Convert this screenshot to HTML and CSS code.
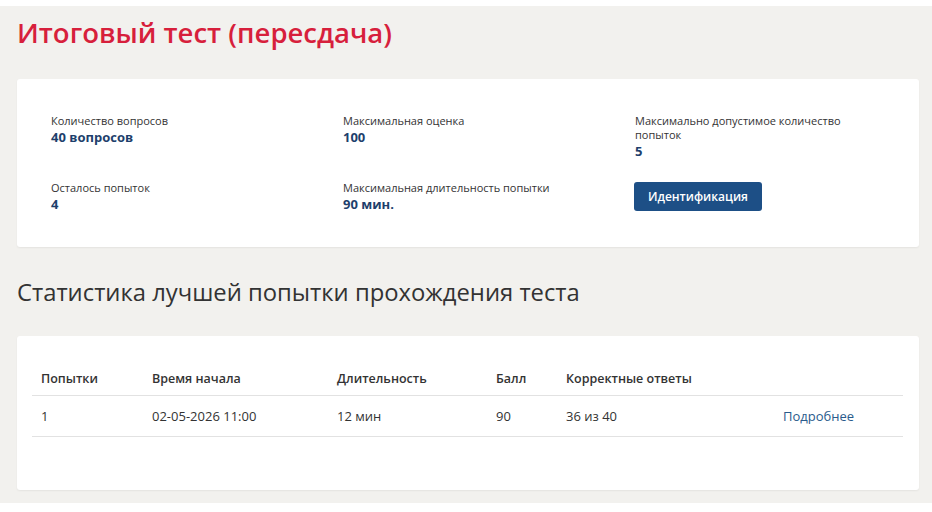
FILE: index.html
```html
<!DOCTYPE html>
<html lang="ru">
<head>
<meta charset="utf-8">
<title>Итоговый тест (пересдача)</title>
<link rel="stylesheet" href="styles.css">
</head>
<body>
<main class="page">
  <h1 class="title">Итоговый тест (пересдача)</h1>

  <section class="card info-card">
    <div class="info-grid">
      <div class="info-item">
        <div class="info-label">Количество вопросов</div>
        <div class="info-value">40 вопросов</div>
      </div>
      <div class="info-item">
        <div class="info-label">Максимальная оценка</div>
        <div class="info-value">100</div>
      </div>
      <div class="info-item">
        <div class="info-label info-label-narrow">Максимально допустимое количество попыток</div>
        <div class="info-value">5</div>
      </div>
      <div class="info-item">
        <div class="info-label">Осталось попыток</div>
        <div class="info-value">4</div>
      </div>
      <div class="info-item">
        <div class="info-label">Максимальная длительность попытки</div>
        <div class="info-value">90 мин.</div>
      </div>
      <div class="info-item">
        <button class="btn" type="button">Идентификация</button>
      </div>
    </div>
  </section>

  <h2 class="subtitle">Статистика лучшей попытки прохождения теста</h2>

  <section class="card table-card">
    <table class="stats">
      <thead>
        <tr>
          <th class="c-attempt">Попытки</th>
          <th class="c-start">Время начала</th>
          <th class="c-dur">Длительность</th>
          <th class="c-score">Балл</th>
          <th class="c-correct">Корректные ответы</th>
          <th class="c-link"></th>
        </tr>
      </thead>
      <tbody>
        <tr>
          <td>1</td>
          <td>02-05-2026 11:00</td>
          <td>12 мин</td>
          <td>90</td>
          <td>36 из 40</td>
          <td><a class="more" href="#">Подробнее</a></td>
        </tr>
      </tbody>
    </table>
  </section>
</main>
</body>
</html>
```

FILE: styles.css
```css
html, body {
  margin: 0;
  padding: 0;
  background: #ffffff;
}

body {
  font-family: "Open Sans", "Noto Sans", "DejaVu Sans", sans-serif;
  color: #333333;
}

.page {
  margin-top: 6px;
  height: 497px;
  box-sizing: border-box;
  background: #f2f1ee;
  padding: 0 13px 0 17px;
  overflow: hidden;
}

.title {
  margin: 0;
  padding-top: 7px;
  height: 54px;
  box-sizing: border-box;
  font-family: "Open Sans", "Noto Sans", sans-serif;
  font-weight: 600;
  font-size: 27.5px;
  line-height: 40px;
  color: #d71f3c;
}

.card {
  background: #ffffff;
  border-radius: 3px;
  box-shadow: 0 1px 2px rgba(0, 0, 0, 0.06);
}

.info-card {
  margin-top: 19px;
  height: 168px;
  box-sizing: border-box;
  padding: 35px 34px 0 34px;
}

.info-grid {
  display: grid;
  grid-template-columns: 250px 250px 250px;
  column-gap: 42px;
  row-gap: 21px;
}

.info-label {
  font-size: 11px;
  line-height: 14px;
  color: #333333;
}

.info-label-narrow {
  max-width: 215px;
}

.info-value {
  font-size: 13px;
  font-weight: 700;
  line-height: 18px;
  color: #1e3f6c;
}

.btn {
  display: inline-block;
  margin-top: 1px;
  margin-left: -1px;
  height: 29px;
  padding: 0 14px;
  border: none;
  border-radius: 3px;
  background: #1d4f86;
  color: #ffffff;
  font-family: "Open Sans", "Noto Sans", sans-serif;
  font-size: 12px;
  font-weight: 600;
  cursor: pointer;
}

.subtitle {
  margin: 0;
  height: 89px;
  box-sizing: border-box;
  padding-top: 30px;
  font-family: "Open Sans", "Noto Sans", sans-serif;
  font-weight: 400;
  font-size: 23.8px;
  line-height: 30px;
  color: #333333;
}

.table-card {
  height: 154px;
  box-sizing: border-box;
  padding: 25px 16px 0 15px;
}

.stats {
  width: 871px;
  border-collapse: collapse;
  table-layout: fixed;
  font-size: 13px;
}

.stats th {
  text-align: left;
  font-weight: 600;
  font-size: 12.5px;
  height: 34px;
  padding: 0 9px;
  border-bottom: 1px solid #e2e2e2;
  color: #333333;
}

.stats td {
  height: 40px;
  padding: 0 9px;
  border-bottom: 1px solid #e2e2e2;
  color: #333333;
}

.c-attempt { width: 93px; }
.c-start { width: 167px; }
.c-dur { width: 141px; }
.c-score { width: 52px; }
.c-correct { width: 199px; }
.c-link { width: 111px; }

.more {
  color: #2a5b8c;
  text-decoration: none;
}
```
